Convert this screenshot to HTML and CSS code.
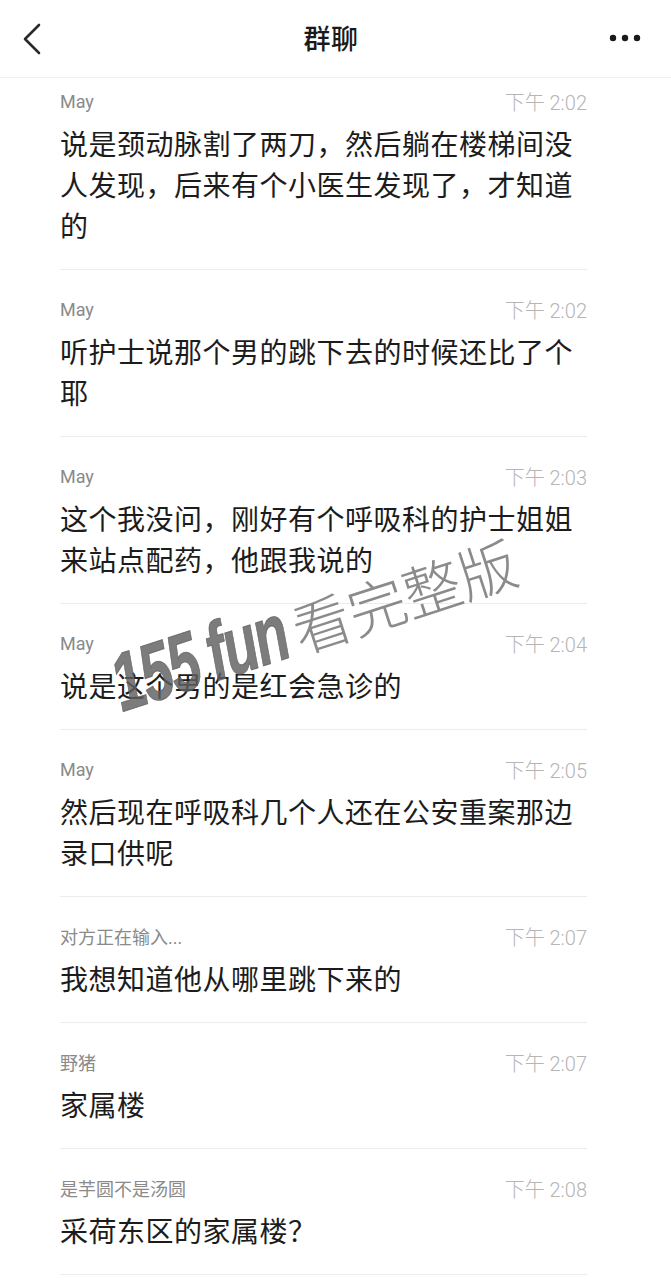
FILE: index.html
```html
<!DOCTYPE html>
<html lang="zh-CN">
<head>
<meta charset="utf-8">
<title>群聊</title>
<link rel="stylesheet" href="styles.css">
</head>
<body>
<div class="page">
  <header class="topbar">
    <svg class="back" width="24" height="34" viewBox="0 0 24 34"><polyline points="17,3 3,17 17,31" fill="none" stroke="#2a2a2a" stroke-width="2.6" stroke-linecap="round" stroke-linejoin="round"/></svg>
    <h1 class="title">群聊</h1>
    <svg class="more" width="34" height="10" viewBox="0 0 34 10"><circle cx="5" cy="5" r="3.2" fill="#1a1a1a"/><circle cx="17" cy="5" r="3.2" fill="#1a1a1a"/><circle cx="29" cy="5" r="3.2" fill="#1a1a1a"/></svg>
  </header>

  <main class="list">
    <section class="msg first">
      <div class="meta"><span class="name">May</span><span class="time">下午 2:02</span></div>
      <p class="text">说是颈动脉割了两刀，然后躺在楼梯间没人发现，后来有个小医生发现了，才知道的</p>
    </section>
    <section class="msg">
      <div class="meta"><span class="name">May</span><span class="time">下午 2:02</span></div>
      <p class="text">听护士说那个男的跳下去的时候还比了个耶</p>
    </section>
    <section class="msg">
      <div class="meta"><span class="name">May</span><span class="time">下午 2:03</span></div>
      <p class="text">这个我没问，刚好有个呼吸科的护士姐姐来站点配药，他跟我说的</p>
    </section>
    <section class="msg">
      <div class="meta"><span class="name">May</span><span class="time">下午 2:04</span></div>
      <p class="text">说是这个男的是红会急诊的</p>
    </section>
    <section class="msg">
      <div class="meta"><span class="name">May</span><span class="time">下午 2:05</span></div>
      <p class="text">然后现在呼吸科几个人还在公安重案那边录口供呢</p>
    </section>
    <section class="msg">
      <div class="meta"><span class="name">对方正在输入...</span><span class="time">下午 2:07</span></div>
      <p class="text">我想知道他从哪里跳下来的</p>
    </section>
    <section class="msg">
      <div class="meta"><span class="name">野猪</span><span class="time">下午 2:07</span></div>
      <p class="text">家属楼</p>
    </section>
    <section class="msg">
      <div class="meta"><span class="name">是芋圆不是汤圆</span><span class="time">下午 2:08</span></div>
      <p class="text">采荷东区的家属楼？</p>
    </section>
  </main>

  <div class="watermark"><span class="wm-latin">155 fun</span><span class="wm-cjk">看完整版</span></div>
</div>
</body>
</html>
```

FILE: styles.css
```css
html, body {
  margin: 0;
  padding: 0;
  background: #ffffff;
}

body {
  font-family: "Noto Sans CJK SC", "Noto Sans", sans-serif;
  color: #1a1a1a;
}

.page {
  position: relative;
  width: 671px;
  height: 1280px;
  overflow: hidden;
}

.topbar {
  height: 77px;
  border-bottom: 1px solid #f0f0f0;
  display: flex;
  align-items: center;
  justify-content: space-between;
  padding: 0 29px 0 22px;
}

.back {
  display: block;
}

.title {
  margin: 0;
  font-size: 27px;
  font-weight: 500;
  color: #1a1a1a;
  letter-spacing: 0.5px;
  position: relative;
  left: 4px;
  top: -1px;
}

.more {
  display: block;
  margin-top: -2px;
}

.list {
  padding: 0 84px 0 60px;
}

.msg {
  padding: 27px 0 23px;
  border-bottom: 1px solid #ececec;
}

.msg.first {
  padding-top: 11px;
}

.meta {
  display: flex;
  justify-content: space-between;
  align-items: center;
  height: 24px;
  margin-bottom: 10px;
}

.name {
  font-family: "Roboto", "Noto Sans CJK SC", sans-serif;
  font-size: 18px;
  color: #8a8a8a;
}

.time {
  font-family: "Roboto", "Noto Sans CJK SC", sans-serif;
  font-size: 20px;
  color: #b5b5b5;
  font-weight: 300;
}

.text {
  margin: 0;
  font-size: 28px;
  line-height: 41px;
  letter-spacing: 0.5px;
  color: #1c1c1c;
}

.watermark {
  position: absolute;
  left: 128px;
  top: 636px;
  display: flex;
  align-items: baseline;
  transform: rotate(-18deg);
  transform-origin: left bottom;
  white-space: nowrap;
  pointer-events: none;
}

.wm-latin {
  display: inline-block;
  font-family: "Liberation Sans", sans-serif;
  font-weight: bold;
  font-style: italic;
  font-size: 82px;
  color: rgba(95, 95, 95, 0.82);
  letter-spacing: -3px;
  word-spacing: -2px;
  transform: scaleX(0.68);
  transform-origin: left bottom;
  margin-right: -76px;
  -webkit-text-stroke: 1px rgba(95, 95, 95, 0.82);
}

.wm-cjk {
  font-family: "Noto Sans CJK SC", sans-serif;
  font-size: 58px;
  font-weight: 300;
  color: rgba(110, 110, 110, 0.8);
}
```
